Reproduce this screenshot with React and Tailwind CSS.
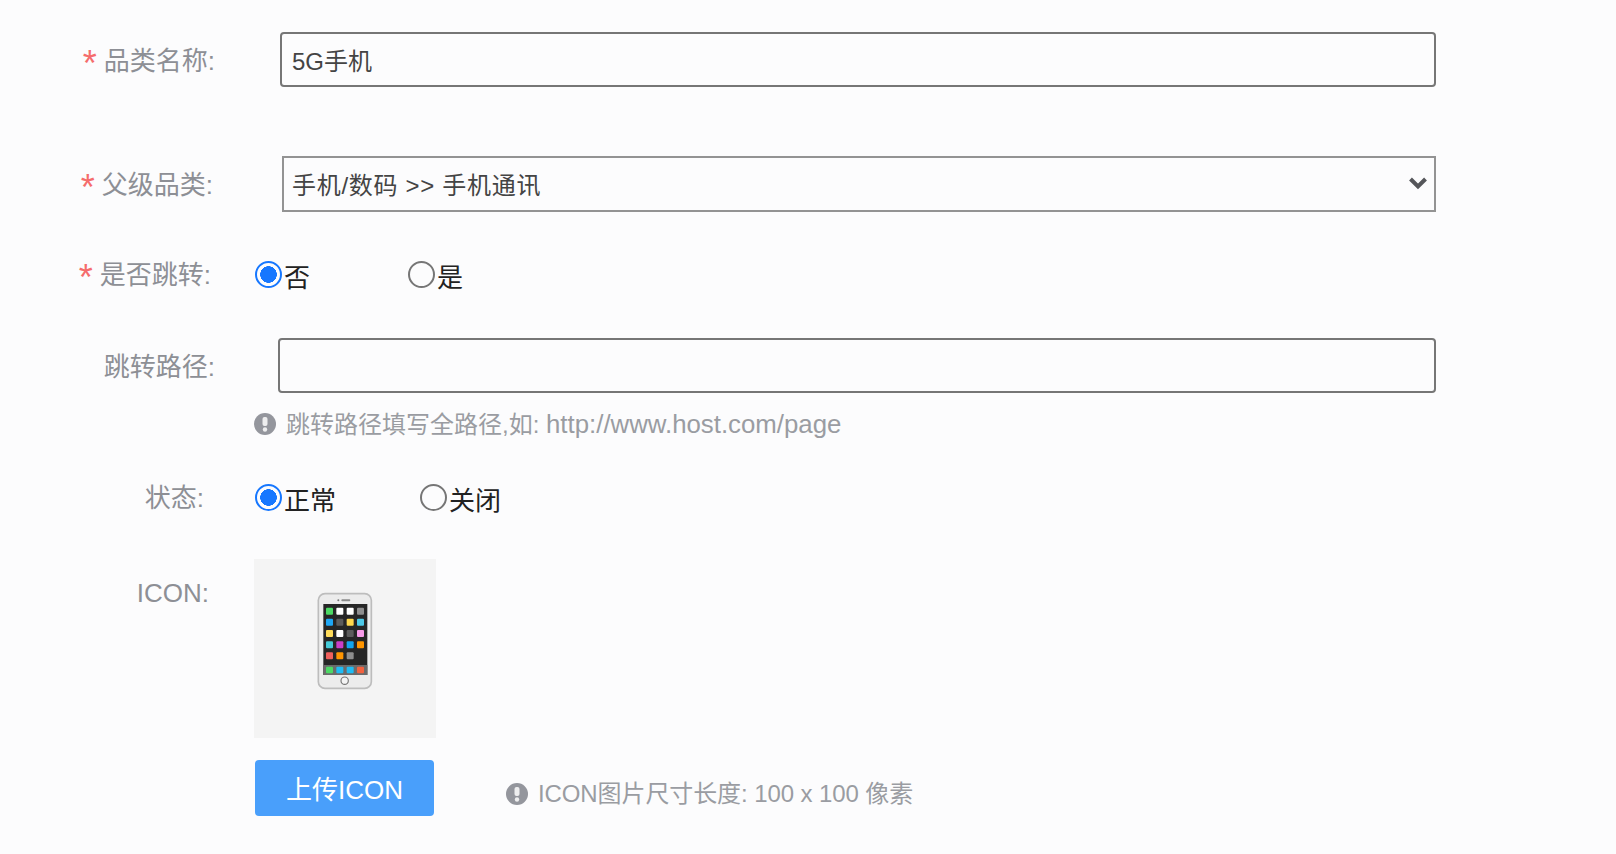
import React from 'react';

const FONT = "font-['Liberation_Sans','Noto_Sans_CJK_SC',sans-serif]";

const Star = () => (
  <span className="relative top-[6px] mr-[7px] text-[36px] leading-[0] text-[#f56c6c]">*</span>
);

const Label = ({ required, width, nudge, children }) => (
  <label className={`${width} ${nudge} shrink-0 text-right text-[26px] leading-[30px] text-[#8d8f95]`}>
    {required && <Star />}
    {children}
  </label>
);

const WarnIcon = () => (
  <svg width="22" height="22" viewBox="0 0 22 22" className="shrink-0">
    <circle cx="11" cy="11" r="11" fill="#94969d" />
    <rect x="8.5" y="4" width="5" height="9" rx="2" fill="#eeeeef" />
    <circle cx="11" cy="16.5" r="2.2" fill="#eeeeef" />
  </svg>
);

const Radio = ({ name, checked, label, width }) => (
  <label className={`${width} flex items-center text-[26px] leading-[30px] text-[#222222]`}>
    <input
      type="radio"
      name={name}
      defaultChecked={checked}
      className="relative top-[-1px] m-0 w-[27px] h-[27px] appearance-none rounded-full border-2 border-[#767676] checked:border-[#1677ff] checked:bg-[radial-gradient(circle_8.5px,#1677ff_95%,transparent_100%)]"
    />
    <span className="ml-[2px] relative top-[3px]">{label}</span>
  </label>
);

const apps = [
  ['#4cd964', '#ffffff', '#ffffff', '#8e8e8e'],
  ['#1ea7f5', '#5c5c5c', '#ffd84d', '#4cc9e8'],
  ['#ffdc5a', '#ffffff', '#5c5c5c', '#f79be8'],
  ['#45cbd8', '#c93fc9', '#12a5f0', '#ff9500'],
  ['#f0605c', '#ff9500', '#8e8e8e', null],
];
const dock = ['#4cd964', '#1fbcf5', '#1fbcf5', '#f4623f'];

const PhoneIcon = () => (
  <svg width="110" height="120" viewBox="0 0 330 360">
    <rect x="85" y="41" width="159" height="284" rx="20" fill="#ececec" stroke="#bdbdbd" strokeWidth="5" />
    <rect x="100" y="72" width="132" height="213" fill="#262626" />
    <rect x="100" y="255" width="132" height="30" fill="#6b6b6b" />
    <circle cx="145" cy="61" r="3" fill="#777777" />
    <rect x="154" y="58" width="27" height="6" rx="3" fill="#8a8a8a" />
    <circle cx="164" cy="302" r="11" fill="#f4f4f4" stroke="#777777" strokeWidth="3.5" />
    {apps.map((row, r) =>
      row.map((c, i) =>
        c ? <rect key={`${r}-${i}`} x={108 + i * 31} y={83 + r * 33.5} width="21" height="21" rx="3" fill={c} /> : null
      )
    )}
    {dock.map((c, i) => (
      <rect key={i} x={108 + i * 31} y="260" width="21" height="20" rx="3" fill={c} />
    ))}
  </svg>
);

const App = () => {
  return (
    <div className={`${FONT} w-[1616px] h-[854px] overflow-hidden bg-[#fcfcfd] pt-[32px]`}>
      {/* 品类名称 */}
      <div className="flex items-center h-[55px]">
        <Label required width="w-[215px]" nudge="pt-[3px]">品类名称:</Label>
        <input
          defaultValue="5G手机"
          className="ml-[65px] w-[1156px] h-[55px] rounded-[4px] border-2 border-[#767676] bg-transparent px-[10px] text-[24px] text-[#444444] outline-none"
        />
      </div>

      {/* 父级品类 */}
      <div className="flex items-center h-[56px] mt-[69px]">
        <Label required width="w-[213px]" nudge="pt-[2px]">父级品类:</Label>
        <div className="relative ml-[69px] w-[1154px] h-[56px]">
          <select className="appearance-none w-full h-full border-2 border-[#939393] bg-transparent pl-[8px] pt-[3px] text-[24px] tracking-[0.7px] text-[#444444] outline-none">
            <option>手机/数码 &gt;&gt; 手机通讯</option>
          </select>
          <svg width="20" height="14" viewBox="0 0 20 14" className="absolute right-[8px] top-[20px]">
            <path d="M2.5 3 L10 10.5 L17.5 3" fill="none" stroke="#55565a" strokeWidth="4" />
          </svg>
        </div>
      </div>

      {/* 是否跳转 */}
      <div className="flex items-center h-[30px] mt-[48px]">
        <Label required width="w-[211px]">是否跳转:</Label>
        <div className="ml-[44px] flex">
          <Radio name="jump" checked label="否" width="w-[153px]" />
          <Radio name="jump" label="是" />
        </div>
      </div>

      {/* 跳转路径 */}
      <div className="flex items-center h-[55px] mt-[48px]">
        <Label width="w-[215px]" nudge="pt-[3px]">跳转路径:</Label>
        <input className="ml-[63px] w-[1158px] h-[55px] rounded-[4px] border-2 border-[#767676] bg-transparent outline-none" />
      </div>
      <div className="flex items-center ml-[254px] mt-[16px] h-[30px] text-[24px] leading-[30px] text-[#9a9ca2]">
        <WarnIcon />
        <span className="ml-[10px]">
          跳转路径填写全路径,如: <span className="text-[25.8px]">http://www.host.com/page</span>
        </span>
      </div>

      {/* 状态 */}
      <div className="flex items-center h-[30px] mt-[44px]">
        <Label width="w-[204px]">状态:</Label>
        <div className="ml-[51px] flex">
          <Radio name="status" checked label="正常" width="w-[165px]" />
          <Radio name="status" label="关闭" />
        </div>
      </div>

      {/* ICON */}
      <div className="flex items-start mt-[46px]">
        <Label width="w-[209px]">
          <span className="relative top-[19px]">ICON:</span>
        </Label>
        <div className="ml-[45px] w-[182px] h-[179px] bg-[#f4f4f4] pl-[36px] pt-[21px]">
          <PhoneIcon />
        </div>
      </div>

      <div className="flex items-center ml-[255px] mt-[22px]">
        <button className="w-[179px] h-[56px] rounded-[4px] bg-[#499ffb] pt-[4px] text-[26px] text-white">上传ICON</button>
        <div className="flex items-center ml-[72px] mt-[11px] text-[24px] leading-[30px] tracking-[-0.1px] text-[#9a9ca2]">
          <WarnIcon />
          <span className="ml-[10px]">ICON图片尺寸长度: 100 x 100 像素</span>
        </div>
      </div>
    </div>
  );
};

export default App;
